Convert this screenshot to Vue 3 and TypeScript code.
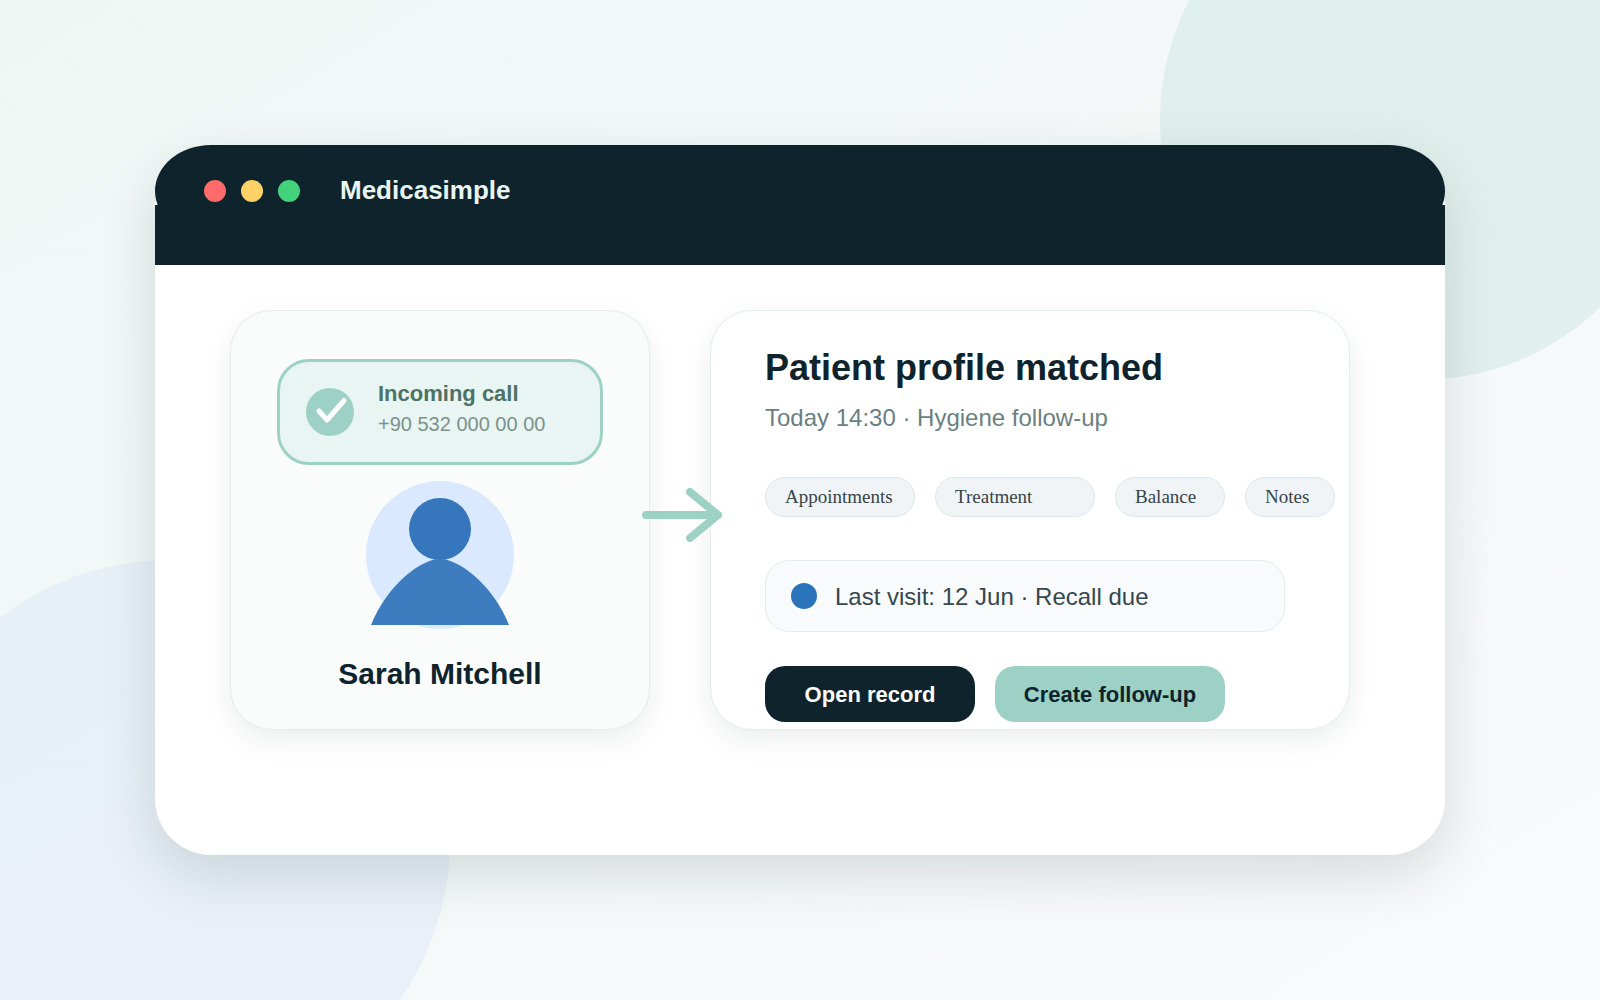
<script setup lang="ts">
interface Tab {
  label: string
  size: 'md' | 'lg' | 'sm' | 'xs'
}

const tabs: Tab[] = [
  { label: 'Appointments', size: 'md' },
  { label: 'Treatment', size: 'lg' },
  { label: 'Balance', size: 'sm' },
  { label: 'Notes', size: 'xs' },
]

const lights: string[] = ['red', 'amber', 'green']
</script>

<template>
  <main class="page">
    <span class="blob blob-green" aria-hidden="true"></span>
    <span class="blob blob-blue" aria-hidden="true"></span>

    <section class="window">
      <header class="header">
        <div class="titlebar">
          <div class="lights">
            <span v-for="light in lights" :key="light" class="light" :class="light"></span>
          </div>
          <span class="brand">Medicasimple</span>
        </div>
      </header>

      <div class="content">
        <article class="card caller">
          <div class="call">
            <svg class="call-icon" viewBox="0 0 48 48" aria-hidden="true">
              <circle cx="24" cy="24" r="24" fill="#9dd1c5" />
              <path
                d="M13 23 L21 32 L38 12.5"
                fill="none"
                stroke="#ffffff"
                stroke-width="5"
                stroke-linecap="round"
                stroke-linejoin="round"
              />
            </svg>
            <div class="call-text">
              <strong class="call-title">Incoming call</strong>
              <span class="call-number">+90 532 000 00 00</span>
            </div>
          </div>

          <svg class="avatar" viewBox="0 0 148 148" aria-hidden="true">
            <circle cx="74" cy="74" r="74" fill="#dbe9fe" />
            <circle cx="74" cy="48" r="31" fill="#3576bc" />
            <path d="M5 144 C22 102 56 78 74 78 S126 102 143 144 Z" fill="#3d7cbf" />
          </svg>

          <h2 class="name">Sarah Mitchell</h2>

          <svg class="arrow" viewBox="0 0 80 54" aria-hidden="true">
            <path
              d="M4 27 H76 M48 4 L76 27 L48 50"
              fill="none"
              stroke="#9dd1c3"
              stroke-width="8"
              stroke-linecap="round"
              stroke-linejoin="round"
            />
          </svg>
        </article>

        <article class="card profile">
          <h1 class="title">Patient profile matched</h1>
          <p class="subtitle">Today 14:30 · Hygiene follow-up</p>

          <nav class="tabs">
            <button v-for="tab in tabs" :key="tab.label" type="button" class="tab" :class="tab.size">
              {{ tab.label }}
            </button>
          </nav>

          <div class="visit">
            <span class="visit-dot"></span>
            <span class="visit-text">Last visit: 12 Jun · Recall due</span>
          </div>

          <div class="actions">
            <button type="button" class="action open">Open record</button>
            <button type="button" class="action create">Create follow-up</button>
          </div>
        </article>
      </div>
    </section>
  </main>
</template>

<style>
body {
  margin: 0;
}
</style>

<style scoped>
.page {
  position: relative;
  display: flex;
  align-items: center;
  justify-content: center;
  box-sizing: border-box;
  min-height: 100vh;
  padding: 40px;
  overflow: hidden;
  background: linear-gradient(to bottom right, #eff7f5 0%, #f9fafb 100%);
  color: #0e232b;
  font-family: "Liberation Sans", Arial, sans-serif;
}

.blob {
  position: absolute;
  border-radius: 50%;
}

.blob-green {
  top: -140px;
  right: -80px;
  width: 520px;
  height: 520px;
  background: rgba(157, 209, 195, 0.22);
}

.blob-blue {
  bottom: -120px;
  left: -110px;
  width: 560px;
  height: 560px;
  background: rgba(221, 231, 247, 0.5);
}

.window {
  position: relative;
  flex: 1;
  max-width: 1290px;
  border-radius: 56px;
  background: #ffffff;
  box-shadow: 0 20px 56px rgba(15, 35, 43, 0.14);
}

.header {
  height: 120px;
  background: linear-gradient(transparent 60px, #0e232b 60px);
}

.titlebar {
  display: flex;
  align-items: center;
  gap: 40px;
  box-sizing: border-box;
  height: 92px;
  padding: 0 49px;
  border-radius: 56px / 46px;
  background: #0e232b;
}

.lights {
  display: flex;
  gap: 15px;
}

.light {
  width: 22px;
  height: 22px;
  border-radius: 50%;
}

.red {
  background: #ff6b6b;
}

.amber {
  background: #ffd166;
}

.green {
  background: #43d17c;
}

.brand {
  padding-bottom: 2px;
  color: #e8f5f2;
  font-size: 26px;
  font-weight: 700;
  line-height: 32px;
}

.content {
  display: grid;
  grid-template-columns: 420fr 640fr;
  gap: 60px;
  padding: 45px 95px 125px 75px;
}

.card {
  box-sizing: border-box;
  min-height: 420px;
  border: 1px solid #e3edeb;
  border-radius: 42px;
  box-shadow: 0 10px 28px rgba(15, 35, 43, 0.08);
}

.caller {
  position: relative;
  z-index: 1;
  display: flex;
  flex-direction: column;
  align-items: center;
  padding: 48px 46px 0;
  background: #f9fcfb;
}

.call {
  display: flex;
  align-items: center;
  align-self: stretch;
  gap: 24px;
  box-sizing: border-box;
  height: 106px;
  padding: 0 26px;
  border: 3px solid #9dd1c3;
  border-radius: 32px;
  background: #e8f5f2;
}

.call-icon {
  flex: none;
  width: 48px;
  height: 48px;
}

.call-text {
  display: flex;
  flex-direction: column;
  padding-bottom: 6px;
  white-space: nowrap;
}

.call-title {
  color: #4d7267;
  font-size: 22px;
  line-height: 30px;
}

.call-number {
  color: #7d928c;
  font-size: 20px;
  line-height: 30px;
}

.avatar {
  width: 148px;
  height: 148px;
  margin-top: 16px;
}

.name {
  margin: 25px 0 0;
  font-size: 30px;
  line-height: 40px;
}

.arrow {
  position: absolute;
  top: 177px;
  right: -73px;
  width: 80px;
  height: 54px;
}

.profile {
  padding: 35px 14px 7px 54px;
  background: #ffffff;
}

.title {
  margin: 0;
  font-size: 36px;
  line-height: 44px;
}

.subtitle {
  margin: 12px 0 0;
  color: #6b7f82;
  font-size: 24px;
  line-height: 32px;
}

.tabs {
  display: flex;
  gap: 20px;
  margin-top: 43px;
}

.tab {
  box-sizing: border-box;
  height: 40px;
  padding: 0 0 0 19px;
  border: 1px solid #dde6ea;
  border-radius: 20px;
  background: #f0f4f7;
  color: #364449;
  font-family: "Liberation Serif", "Times New Roman", serif;
  font-size: 19px;
  line-height: 24px;
  text-align: left;
}

.md {
  width: 150px;
}

.lg {
  width: 160px;
}

.sm {
  width: 110px;
}

.xs {
  width: 90px;
}

.visit {
  display: flex;
  align-items: center;
  gap: 18px;
  box-sizing: border-box;
  max-width: 520px;
  height: 72px;
  margin-top: 43px;
  padding: 0 25px;
  border: 1px solid #e4ecee;
  border-radius: 24px;
  background: #f8fafc;
  color: #34484e;
  font-size: 24px;
  line-height: 32px;
}

.visit-dot {
  width: 26px;
  height: 26px;
  border-radius: 50%;
  background: #2b73b8;
}

.visit-text {
  padding-top: 2px;
}

.actions {
  display: flex;
  gap: 20px;
  margin-top: 34px;
}

.action {
  height: 56px;
  padding: 2px 0 0;
  border: 0;
  border-radius: 20px;
  font-family: inherit;
  font-size: 22px;
  font-weight: 700;
  line-height: 28px;
}

.open {
  width: 210px;
  background: #0e232b;
  color: #ffffff;
}

.create {
  width: 230px;
  background: #9dd1c5;
  color: #0e232b;
}
</style>
